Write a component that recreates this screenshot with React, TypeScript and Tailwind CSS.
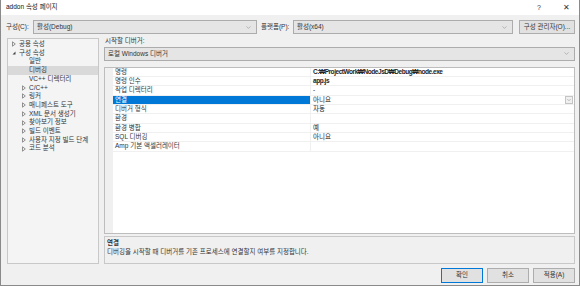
import { ChevronDown } from "lucide-react";

const font = "font-['Liberation_Sans','Noto_Sans_CJK_KR',sans-serif]";

type TreeItem = { label: string; depth: 0 | 1; arrow?: "closed" | "open"; selected?: boolean };

const tree: TreeItem[] = [
  { label: "공용 속성", depth: 0, arrow: "closed" },
  { label: "구성 속성", depth: 0, arrow: "open" },
  { label: "일반", depth: 1 },
  { label: "디버깅", depth: 1, selected: true },
  { label: "VC++ 디렉터리", depth: 1 },
  { label: "C/C++", depth: 1, arrow: "closed" },
  { label: "링커", depth: 1, arrow: "closed" },
  { label: "매니페스트 도구", depth: 1, arrow: "closed" },
  { label: "XML 문서 생성기", depth: 1, arrow: "closed" },
  { label: "찾아보기 정보", depth: 1, arrow: "closed" },
  { label: "빌드 이벤트", depth: 1, arrow: "closed" },
  { label: "사용자 지정 빌드 단계", depth: 1, arrow: "closed" },
  { label: "코드 분석", depth: 1, arrow: "closed" },
];

const props: { name: string; value: string; bold?: boolean; active?: boolean }[] = [
  { name: "명령", value: "C:₩ProjectWork₩NodeJsD₩Debug₩node.exe", bold: true },
  { name: "명령 인수", value: "app.js", bold: true },
  { name: "작업 디렉터리", value: "-" },
  { name: "연결", value: "아니요", active: true },
  { name: "디버거 형식", value: "자동" },
  { name: "환경", value: "" },
  { name: "환경 병합", value: "예" },
  { name: "SQL 디버깅", value: "아니요" },
  { name: "Amp 기본 액셀러레이터", value: "" },
];

function Arrow({ kind }: { kind?: "closed" | "open" }) {
  if (!kind) return <span className="w-[6px]" />;
  if (kind === "open")
    return (
      <svg width="6" height="6" viewBox="0 0 6 6" className="shrink-0">
        <path d="M4.5 1.5 V4.5 H1.5 Z" fill="#444" />
      </svg>
    );
  return (
    <svg width="6" height="6" viewBox="0 0 6 6" className="shrink-0">
      <path d="M1.5 0.8 L4.3 3 L1.5 5.2 Z" fill="none" stroke="#777" strokeWidth="0.8" />
    </svg>
  );
}

function Combo({ text, className }: { text: string; className: string }) {
  return (
    <div className={`flex h-[14px] items-center justify-between border border-[#acacac] bg-[#e5e5e5] pl-[3px] pr-[4px] ${className}`}>
      <span className="text-[6.5px] leading-none text-[#333]">{text}</span>
      <ChevronDown size={7} strokeWidth={1.5} className="text-[#777]" />
    </div>
  );
}

function Btn({ label, primary }: { label: string; primary?: boolean }) {
  return (
    <div
      className={`flex h-[15px] w-[42px] items-center justify-center bg-[#e1e1e1] text-[6.5px] leading-none text-[#333] ${
        primary ? "border border-[#0078d7]" : "border border-[#adadad]"
      }`}
    >
      {label}
    </div>
  );
}

export default function App() {
  return (
    <div className={`flex h-[286px] w-[580px] flex-col border-x border-b border-[#8a8a8a] bg-[#f0f0f0] ${font}`}>
      {/* title bar */}
      <div className="flex h-[15px] shrink-0 items-center justify-between bg-white pl-[5px] pr-[9px] text-[6.5px] leading-none text-[#111]">
        <span>addon 속성 페이지</span>
        <div className="flex items-center gap-[22px] text-[#333]">
          <span className="text-[7px]">?</span>
          <span className="text-[8px]">✕</span>
        </div>
      </div>

      {/* config row */}
      <div className="mt-[5px] flex h-[14px] shrink-0 items-center pl-[5px] pr-[4px] text-[6.5px] leading-none text-[#333]">
        <span className="w-[27px]">구성(C):</span>
        <Combo text="활성(Debug)" className="w-[224px]" />
        <span className="ml-[4px] w-[32px]">플랫폼(P):</span>
        <Combo text="활성(x64)" className="w-[220px]" />
        <div className="ml-[6px] flex h-[14px] flex-1 items-center justify-center border border-[#adadad] bg-[#e1e1e1]">
          구성 관리자(O)...
        </div>
      </div>

      {/* body */}
      <div className="mt-[4px] flex h-[226px] shrink-0 pl-[6px] pr-[4px]">
        <div className="flex w-[92px] shrink-0 flex-col border border-[#c8c8c8] bg-[#f4f4f4] pt-[1px] text-[6.5px] leading-none text-[#333]">
          {tree.map((t) => (
            <div
              key={t.label}
              className={`flex h-[8.7px] items-center gap-[2px] ${t.depth === 0 ? "pl-[3px]" : "pl-[13px]"} ${
                t.selected ? "bg-[#d9d9d9]" : ""
              }`}
            >
              <Arrow kind={t.arrow} />
              <span>{t.label}</span>
            </div>
          ))}
        </div>

        <div className="ml-[5px] flex flex-1 flex-col">
          <div className="h-[9px] pl-[1px] text-[6.5px] leading-none text-[#333]">시작할 디버거:</div>
          <Combo text="로컬 Windows 디버거" className="w-full" />

          <div className="mt-[6px] flex h-[168px] flex-col border border-[#bdbdbd] bg-white">
            {props.map((p) => (
              <div key={p.name} className="flex h-[9.3px] border-b border-[#f0f0f0] text-[6.5px] leading-none">
                <div className="w-[8px] shrink-0 bg-[#f0f0f0]" />
                <div
                  className={`flex w-[198px] shrink-0 items-center border-r border-[#f0f0f0] pl-[2px] ${
                    p.active ? "bg-[#0078d7] text-white" : "text-[#333]"
                  }`}
                >
                  {p.name}
                </div>
                <div
                  className={`flex flex-1 items-center justify-between pl-[2px] text-[#222] ${
                    p.bold ? "font-bold tracking-[-0.45px]" : ""
                  }`}
                >
                  <span>{p.value}</span>
                  {p.active ? (
                    <div className="mr-[1px] flex h-[8px] w-[8px] items-center justify-center border border-[#c4c4c4] bg-[#f0f0f0]">
                      <ChevronDown size={6} strokeWidth={1.5} className="text-[#666]" />
                    </div>
                  ) : null}
                </div>
              </div>
            ))}
            <div className="flex flex-1">
              <div className="w-[8px] bg-[#f0f0f0]" />
              <div className="w-[198px]" />
            </div>
          </div>

          <div className="mt-[2px] flex h-[28px] flex-col border border-[#c8c8c8] bg-[#f0f0f0] px-[2px] pt-[1px] text-[6.5px] leading-[9px] text-[#333]">
            <span className="font-bold">연결</span>
            <span>디버깅을 시작할 때 디버거를 기존 프로세스에 연결할지 여부를 지정합니다.</span>
          </div>
        </div>
      </div>

      {/* buttons */}
      <div className="mt-[4px] flex justify-end gap-[4px] pr-[4px]">
        <Btn label="확인" primary />
        <Btn label="취소" />
        <Btn label="적용(A)" />
      </div>
    </div>
  );
}
